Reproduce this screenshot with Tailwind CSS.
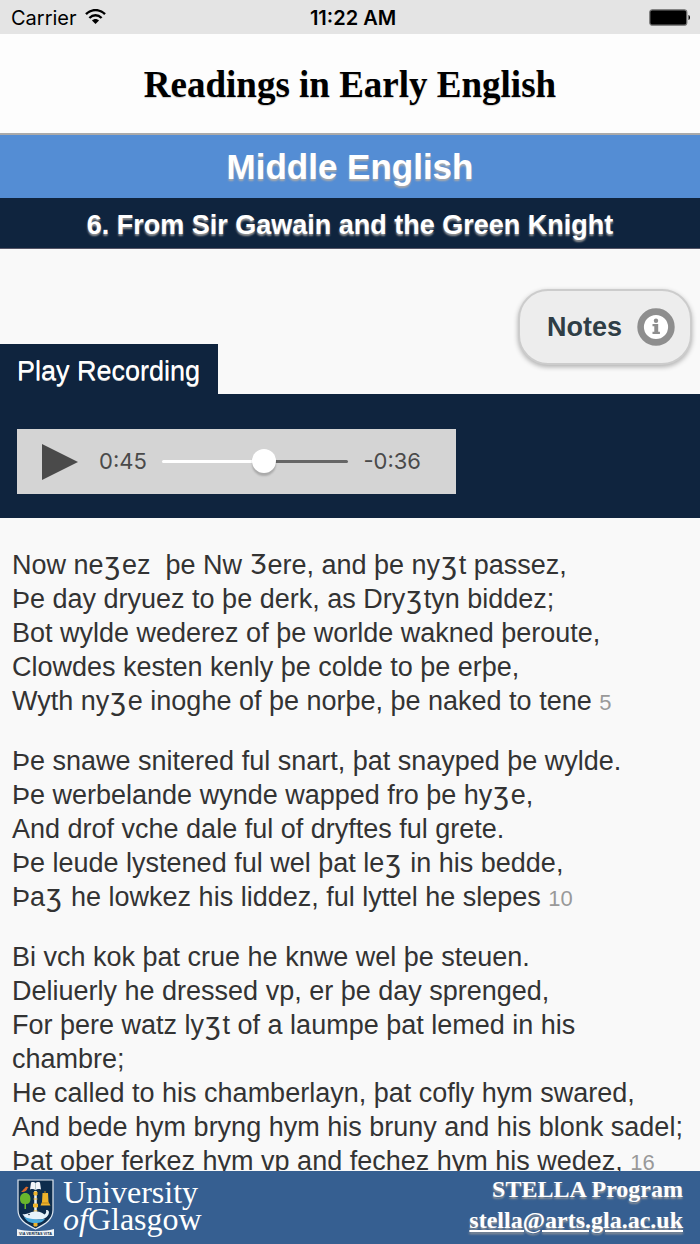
<!DOCTYPE html>
<html lang="en">
<head>
<meta charset="utf-8">
<meta name="viewport" content="width=device-width, initial-scale=1">
<title>Readings in Early English</title>
<script src="https://cdn.jsdelivr.net/npm/@tailwindcss/browser@4"></script>
</head>
<body class="flex h-screen flex-col overflow-hidden bg-[#f9f9f9] font-['Liberation_Sans',sans-serif] text-[#333]">

  <!-- Status bar -->
  <div class="grid h-[34px] shrink-0 grid-cols-3 items-center bg-[#e4e4e4] px-[11px] pt-[2px] font-['Inter',sans-serif] text-[20px] text-black">
    <div class="flex items-center gap-[8px]">
      <span>Carrier</span>
      <svg class="-mt-[2px] h-[16px] w-[21px]" viewBox="0 0 21 16" fill="none" stroke="#000" stroke-width="2.4" aria-label="Wi-Fi">
        <path d="M1 5.2C6.3-.3 14.7-.3 20 5.2"/>
        <path d="M4.4 9C8 5.4 13 5.4 16.6 9"/>
        <path d="M7 11.4c2-2 5-2 7 0L10.500 15z" fill="#000" stroke="none"/>
      </svg>
    </div>
    <span class="pl-[6px] text-center text-[20px] font-semibold">11:22 AM</span>
    <svg class="-mt-[2px] -mr-[2px] h-[17px] w-[42px] justify-self-end" viewBox="0 0 42 17" aria-label="Battery full">
      <rect x=".8" y=".8" width="37" height="15.400" rx="2.500" fill="#000" stroke="#777" stroke-width="1.200"/>
      <path d="M39.500 6c2 .6 2 4.400 0 5z" fill="#000"/>
    </svg>
  </div>

  <header class="flex h-[101px] shrink-0 items-center justify-center border-b-2 border-[#aaa] bg-[#fdfdfd] pt-[2px]">
    <h1 class="font-['Liberation_Serif',serif] text-[37px] font-bold text-black [text-shadow:0_1px_1px_#ccc]">Readings in Early English</h1>
  </header>

  <h2 class="flex h-[63px] shrink-0 items-center justify-center bg-[#548dd4] pt-[2px] text-[35px] font-bold text-white [text-shadow:0_2px_2px_#aaa]">Middle English</h2>
  <h3 class="flex h-[51px] shrink-0 items-center justify-center border-b border-[#556] bg-[#0f243e] pt-[4px] text-[27px] font-bold text-white [text-shadow:0_2px_2px_#999]">6. From Sir Gawain and the Green Knight</h3>

  <main class="min-h-0 flex-1 overflow-hidden">
    <div class="flex items-end justify-between pt-[40px]">
      <div class="flex h-[50px] w-[218px] items-center bg-[#0f243e] pl-[17px] pt-[4px] text-[27px] text-white [text-shadow:0_1px_0_#ccc]">Play Recording</div>
      <button type="button" class="mr-[8px] mb-[29px] flex h-[76px] w-[174px] items-center justify-between rounded-[30px] border-2 border-[#ccc] bg-[#ededed] pr-[15px] pl-[27px] text-[27px] font-bold text-[#2f3e46] shadow-[0_2px_5px_rgba(0,0,0,0.3)] [text-shadow:0_1px_0_#f3f3f3]">
        Notes
        <svg class="size-[38px]" viewBox="0 0 38 38" aria-hidden="true">
          <circle cx="19" cy="19" r="15.400" fill="#fff" stroke="#8e8e8e" stroke-width="6.600"/>
          <circle cx="19" cy="12.700" r="2.200" fill="#8e8e8e"/>
          <path d="M15.500 16h5.700v7.700h1.700V26h-7.400v-2.300h1.800v-5.400h-1.800z" fill="#8e8e8e"/>
        </svg>
      </button>
    </div>

    <section class="bg-[#0f243e] px-[17px] pt-[35px] pb-[24px]" aria-label="Recording">
      <div class="flex h-[65px] max-w-[439px] items-center bg-[#d4d4d4] pr-[35px] pl-[25px] font-['Inter',sans-serif] text-[22px] text-[#4a4a4a]">
        <button type="button" aria-label="Play" class="mr-[21px]">
          <svg class="h-[36px] w-[36px]" viewBox="0 0 36 36"><path d="M0 0l36 18L0 36z" fill="#4a4a4a"/></svg>
        </button>
        <span>0:45</span>
        <input type="range" min="0" max="81" value="45" aria-label="Position" class="mx-[15px] h-[24px] min-w-0 flex-1 appearance-none bg-transparent [&::-webkit-slider-runnable-track]:h-[3px] [&::-webkit-slider-runnable-track]:rounded-full [&::-webkit-slider-runnable-track]:bg-[linear-gradient(to_right,#fff_55%,#666_55%)] [&::-webkit-slider-thumb]:-mt-[11px] [&::-webkit-slider-thumb]:size-[24px] [&::-webkit-slider-thumb]:appearance-none [&::-webkit-slider-thumb]:rounded-full [&::-webkit-slider-thumb]:bg-white [&::-webkit-slider-thumb]:shadow-[0_3px_2px_rgba(0,0,0,0.2)]">
        <span>-0:36</span>
      </div>
    </section>

    <article class="flex flex-col gap-[26px] px-[12px] pt-[30px] text-[27px] leading-[34px] [&_b]:px-[2px] [&_b]:font-['Lato',sans-serif] [&_b]:text-[33px] [&_b]:leading-[0] [&_b]:font-normal [&_i]:px-px [&_i]:font-['Lato',sans-serif] [&_i]:leading-[0] [&_i]:not-italic [&_span]:text-[22px] [&_span]:leading-[0] [&_span]:text-[#999]">
      <p>Now ne<b>ȝ</b>ez&nbsp; þe Nw <i>Ȝ</i>ere, and þe ny<b>ȝ</b>t passez,<br>
        Þe day dryuez to þe derk, as Dry<b>ȝ</b>tyn biddez;<br>
        Bot wylde wederez of þe worlde wakned þeroute,<br>
        Clowdes kesten kenly þe colde to þe erþe,<br>
        Wyth ny<b>ȝ</b>e inoghe of þe norþe, þe naked to tene <span>5</span></p>
      <p>Þe snawe snitered ful snart, þat snayped þe wylde.<br>
        Þe werbelande wynde wapped fro þe hy<b>ȝ</b>e,<br>
        And drof vche dale ful of dryftes ful grete.<br>
        Þe leude lystened ful wel þat le<b>ȝ</b> in his bedde,<br>
        Þa<b>ȝ</b> he lowkez his liddez, ful lyttel he slepes <span>10</span></p>
      <p>Bi vch kok þat crue he knwe wel þe steuen.<br>
        Deliuerly he dressed vp, er þe day sprenged,<br>
        For þere watz ly<b>ȝ</b>t of a laumpe þat lemed in his chambre;<br>
        He called to his chamberlayn, þat cofly hym swared,<br>
        And bede hym bryng hym his bruny and his blonk sadel;<br>
        Þat oþer ferkez hym vp and fechez hym his wedez, <span>16</span></p>
    </article>
  </main>

  <footer class="flex h-[73px] shrink-0 items-start justify-between bg-[#365f91] px-[17px] font-['Liberation_Serif',serif] text-white">
    <div class="flex items-start gap-[9px] pt-[8px]">
      <svg class="h-[59px] w-[37px]" viewBox="0 0 37 59" aria-hidden="true">
        <path d="M1 1h35v30c0 9-7 14-17.500 19C8 45 1 40 1 31z" fill="#0d2c4c" stroke="#dfe8f2" stroke-width="1.200"/>
        <path d="M14 3.500c2-.8 3.300-.6 4.500.5 1.200-1.100 2.500-1.300 4.500-.5l1 7c-2.300-.7-4-.6-5.500.7-1.500-1.300-3.200-1.400-5.500-.7z" fill="#f4f7fa"/>
        <path d="M18.500 4v7" stroke="#8aa" stroke-width=".6"/>
        <path d="M18.500 12v23" stroke="#e8edf2" stroke-width="2.600"/>
        <path d="M17 13h3v3h-3zM16.500 20h4M16.500 25h4v3h-4zM16.500 32h4M17 44h3v3h-3z" fill="#eeb32b" stroke="#eeb32b"/>
        <path d="M4 13c2-1 2-3 4-4 0-1 2-2 3.500-.5-1 .5-1 1-1.500 2-1 2-3 2.500-6 2.500z" fill="#d9692b"/>
        <path d="M8.300 14c3.500 0 5.200 2.500 5.200 6 0 3-1.500 5-4.500 5v5H7.500v-5C4.500 25 3 23 3 20c0-3.500 1.800-6 5.300-6z" fill="#69b52d"/>
        <path d="M25.500 14h5.500l.5 9 2 3.500H23.500l1.500-3.500z" fill="#eeb32b"/>
        <path d="M28 12v2.500M25 24h7" stroke="#bc8418"/>
        <path d="M5.500 35c5 1 7-2 12-2.500 5-.5 8 1 10 3 1.500-1 2-2.500 1.500-4.500 3 0 3.500 2 2.500 4.500-2 4-6 5-10 5-8 1-13 0-16-5.500z" fill="#e6f3fb"/>
        <path d="M7 38c6 2 13 3 21 2-3 4-6 4-10.500 4S10 42.500 7 38z" fill="#49a9dc"/>
        <circle cx="12" cy="35.500" r=".8" fill="#123"/>
        <path d="M0 50l4 1c9 1.500 20 1.500 29 0l4-1v7H0z" fill="#f0f3f6"/>
        <text x="18.500" y="56.300" text-anchor="middle" font-family="Liberation Sans" font-weight="700" font-size="3.800" fill="#0d2c4c">VIA VERITAS VITA</text>
      </svg>
      <div class="text-[32px] leading-[27px]">
        <div>University</div>
        <div><i>of</i>Glasgow</div>
      </div>
    </div>
    <div class="pt-[3px] text-right text-[24px] leading-[31px] font-bold [text-shadow:0_2px_2px_#999]">
      <div>STELLA Program</div>
      <a href="mailto:stella@arts.gla.ac.uk" class="underline">stella@arts.gla.ac.uk</a>
    </div>
  </footer>
</body>
</html>
